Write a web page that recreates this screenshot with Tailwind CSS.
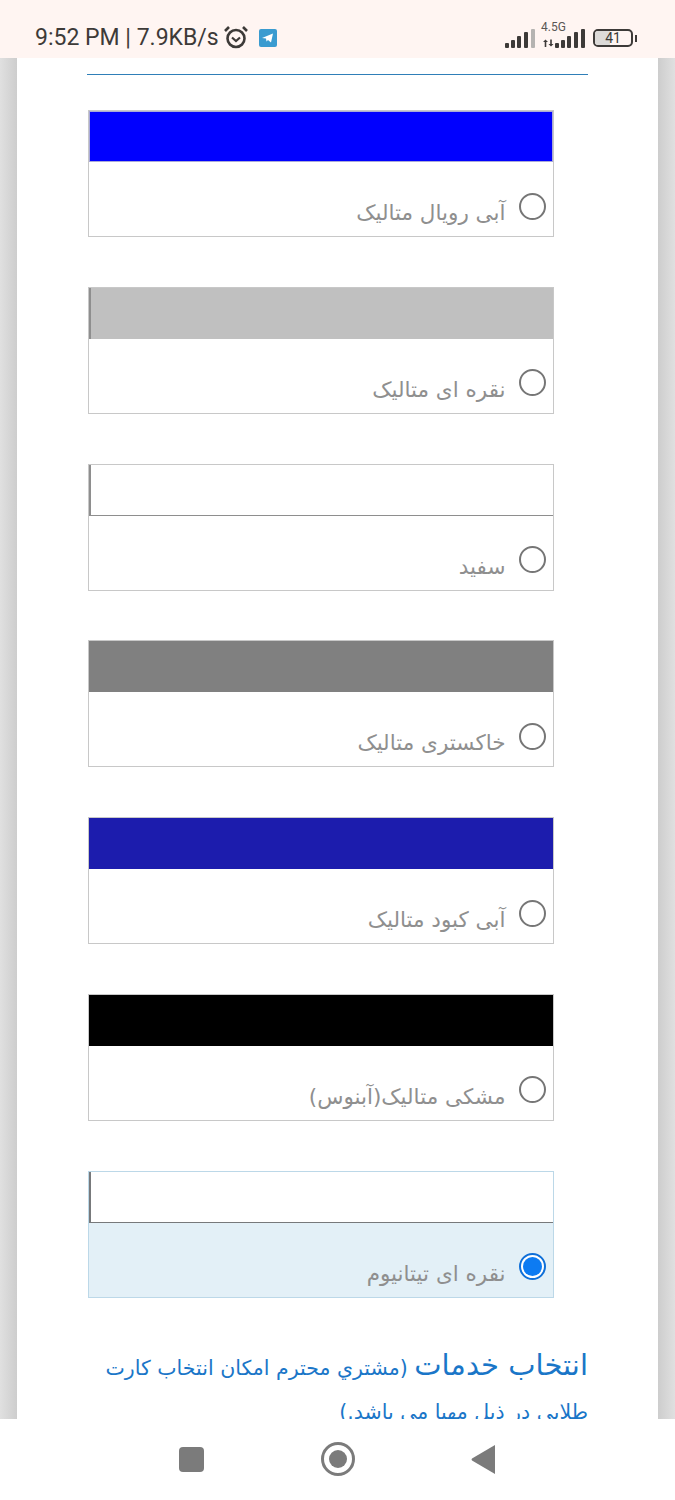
<!DOCTYPE html>
<html lang="fa">
<head>
    <meta charset="UTF-8">
    <title>انتخاب رنگ</title>
    <script src="https://cdn.jsdelivr.net/npm/@tailwindcss/browser@4"></script>
</head>
<body class="bg-white font-['DejaVu_Sans',sans-serif]">
<div class="w-[675px] h-[1500px] flex flex-col overflow-hidden">

    <!-- Status bar -->
    <div class="h-[58px] shrink-0 bg-[#fff5f2] flex items-end justify-between pl-[35px] pr-[38px] pb-[6px] text-[#3d3a38]">
        <div class="flex items-center h-[28px]">
            <span class="font-['Roboto',sans-serif] text-[23px] leading-[28px] whitespace-nowrap">9:52 PM | 7.9KB/s</span>
            <svg class="ml-[5px] mb-[2px]" width="24" height="24" viewBox="0 0 24 24" fill="none" stroke="#3d3a38">
                <circle cx="12" cy="13.500" r="8.500" stroke-width="2.600"/>
                <path d="M1 6l4-4M23 6l-4-4" stroke-width="2.600"/>
                <path d="M8 12.500l4 3.500 4-3.500" stroke-width="2.200"/>
            </svg>
            <svg class="ml-[11px]" width="18" height="18" viewBox="0 0 18 18">
                <rect width="18" height="18" rx="2" fill="#3a9bd0"/>
                <path d="M3 9l11-4.500-2 9-3-2.500-1.500 1.500-.5-3z" fill="#fff"/>
            </svg>
        </div>
        <div class="flex items-center gap-[6px] mb-[2px]">
            <svg width="30" height="19" viewBox="0 0 30 19" fill="#3d3a38">
                <rect x="0" y="14" width="4" height="5" rx="1"/>
                <rect x="6" y="11" width="4" height="8" rx="1"/>
                <rect x="12" y="7" width="4" height="12" rx="1"/>
                <rect x="19" y="3" width="4" height="16" rx="1"/>
                <rect x="26" y="0" width="4" height="19" rx="1" fill="#b5b3b1"/>
            </svg>
            <div class="relative w-[44px] h-[24px]">
                <span class="absolute left-[0px] top-[-6px] font-['Roboto',sans-serif] text-[12px] leading-[14px] text-[#5a5755]">4.5G</span>
                <svg class="absolute left-0 bottom-[2px]" width="44" height="19" viewBox="0 0 44 19" fill="#3d3a38">
                    <path d="M2 13l2.500-2.500L7 13H5.300v5H3.700v-5zM7.500 15l2.500 2.500 2.500-2.500h-1.700v-4.500H9.200V15z"/>
                    <rect x="14" y="14" width="4" height="5" rx="1"/>
                    <rect x="20" y="11" width="4" height="8" rx="1"/>
                    <rect x="26" y="7" width="4" height="12" rx="1"/>
                    <rect x="33" y="3" width="4" height="16" rx="1"/>
                    <rect x="40" y="0" width="4" height="19" rx="1"/>
                </svg>
            </div>
            <div class="flex items-center ml-[2px]">
                <div class="relative w-[40px] h-[18px] border-2 border-[#3d3a38] rounded-[5px] overflow-hidden">
                    <div class="w-[15px] h-full bg-[#dcdad8]"></div>
                    <span class="absolute inset-0 flex items-center justify-center font-['Roboto',sans-serif] text-[14px] leading-none">41</span>
                </div>
                <div class="w-[2px] h-[7px] ml-[2px] bg-[#3d3a38]"></div>
            </div>
        </div>
    </div>

    <!-- Page content -->
    <div class="flex-1 min-h-0 flex">
        <div class="w-[17px] shrink-0 bg-gradient-to-r from-[#e0e0e0] to-[#cdcdcd]"></div>
        <div class="w-[641px] shrink-0 bg-white overflow-hidden pt-[16px]" dir="rtl">
            <div class="ml-[70px] mr-[70px] border-t border-[#2f7fb8]"></div>

            <div class="mt-[35px] ml-[71px] mr-[104.500px] flex flex-col gap-[49.800px]">

                <div class="h-[127px] border border-[#c8c8c8] bg-white">
                    <div class="h-[51px] bg-[#0000ff] border border-[#a9a9d8]"></div>
                    <div class="flex items-center h-[75px] pt-[27px]">
                        <span class="w-[27px] h-[27px] mr-[7px] mb-[14px] rounded-full border-2 border-[#767676] bg-white shrink-0"></span>
                        <span class="mr-[13px] text-[21.500px] leading-[30px] text-[#8f8f8f] whitespace-nowrap">آبی رویال متالیک</span>
                    </div>
                </div>

                <div class="h-[127px] border border-[#c8c8c8] bg-white">
                    <div class="h-[51px] bg-[#c0c0c0] border-l-2 border-[#8e8e8e]"></div>
                    <div class="flex items-center h-[75px] pt-[27px]">
                        <span class="w-[27px] h-[27px] mr-[7px] mb-[14px] rounded-full border-2 border-[#767676] bg-white shrink-0"></span>
                        <span class="mr-[13px] text-[21.500px] leading-[30px] text-[#8f8f8f] whitespace-nowrap">نقره ای متالیک</span>
                    </div>
                </div>

                <div class="h-[127px] border border-[#c8c8c8] bg-white">
                    <div class="h-[51px] bg-white border-l-2 border-b border-[#8e8e8e]"></div>
                    <div class="flex items-center h-[75px] pt-[27px]">
                        <span class="w-[27px] h-[27px] mr-[7px] mb-[14px] rounded-full border-2 border-[#767676] bg-white shrink-0"></span>
                        <span class="mr-[13px] text-[21.500px] leading-[30px] text-[#8f8f8f] whitespace-nowrap">سفید</span>
                    </div>
                </div>

                <div class="h-[127px] border border-[#c8c8c8] bg-white">
                    <div class="h-[51px] bg-[#808080]"></div>
                    <div class="flex items-center h-[75px] pt-[27px]">
                        <span class="w-[27px] h-[27px] mr-[7px] mb-[14px] rounded-full border-2 border-[#767676] bg-white shrink-0"></span>
                        <span class="mr-[13px] text-[21.500px] leading-[30px] text-[#8f8f8f] whitespace-nowrap">خاکستری متالیک</span>
                    </div>
                </div>

                <div class="h-[127px] border border-[#c8c8c8] bg-white">
                    <div class="h-[51px] bg-[#1c1cad]"></div>
                    <div class="flex items-center h-[75px] pt-[27px]">
                        <span class="w-[27px] h-[27px] mr-[7px] mb-[14px] rounded-full border-2 border-[#767676] bg-white shrink-0"></span>
                        <span class="mr-[13px] text-[21.500px] leading-[30px] text-[#8f8f8f] whitespace-nowrap">آبی کبود متالیک</span>
                    </div>
                </div>

                <div class="h-[127px] border border-[#c8c8c8] bg-white">
                    <div class="h-[51px] bg-black"></div>
                    <div class="flex items-center h-[75px] pt-[27px]">
                        <span class="w-[27px] h-[27px] mr-[7px] mb-[14px] rounded-full border-2 border-[#767676] bg-white shrink-0"></span>
                        <span class="mr-[13px] text-[21.500px] leading-[30px] text-[#8f8f8f] whitespace-nowrap">مشکی متالیک(آبنوس)</span>
                    </div>
                </div>

                <div class="h-[127px] border border-[#bcd8e8] bg-[#e3f0f7]">
                    <div class="h-[51px] bg-white border-l-2 border-b border-[#77797b]"></div>
                    <div class="flex items-center h-[75px] pt-[27px]">
                        <span class="w-[27px] h-[27px] mr-[7px] mb-[14px] rounded-full border-2 border-[#0f6fd8] bg-white shrink-0 flex items-center justify-center">
                            <span class="w-[19px] h-[19px] rounded-full bg-[#0d7bf2]"></span>
                        </span>
                        <span class="mr-[13px] text-[21.500px] leading-[30px] text-[#8f8f8f] whitespace-nowrap">نقره ای تیتانیوم</span>
                    </div>
                </div>
            </div>

            <p class="mt-[45px] mr-[70px] ml-[70px] text-[#1a76c8] text-[20.500px] leading-[44px]">
                <span class="text-[29px]">انتخاب خدمات</span> (مشتري محترم امكان انتخاب كارت طلايي در ذيل مهيا مي باشد.)
            </p>
        </div>
        <div class="w-[17px] shrink-0 bg-gradient-to-r from-[#cdcdcd] to-[#e0e0e0]"></div>
    </div>

    <!-- Navigation bar -->
    <div class="h-[81px] shrink-0 bg-white relative flex items-center justify-between pl-[179px] pr-[180px] pb-[1px]">
        <div class="w-[25px] h-[25px] rounded-[4px] bg-[#7b7b7b]"></div>
        <div class="w-[34px] h-[34px] rounded-full border-[3px] border-[#7b7b7b] flex items-center justify-center">
            <div class="w-[18px] h-[18px] rounded-full bg-[#7b7b7b]"></div>
        </div>
        <svg width="24" height="29" viewBox="0 0 24 29"><path d="M24 0v29L1 15.500Q0 14.500 1 13.500z" fill="#7b7b7b"/></svg>
    </div>
</div>
</body>
</html>
